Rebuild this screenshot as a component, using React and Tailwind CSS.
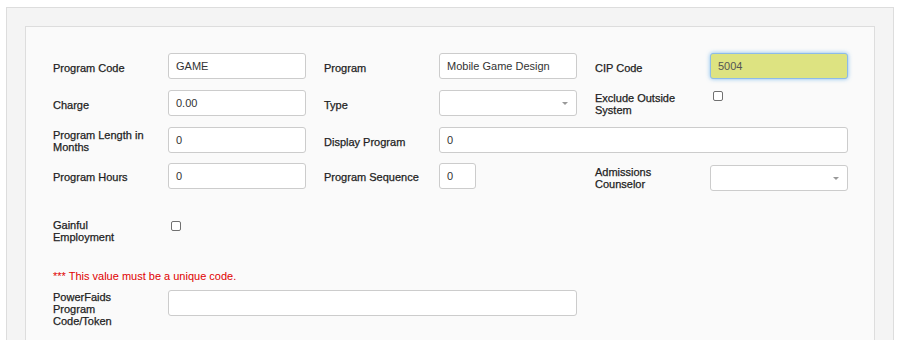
import React from 'react';

const font = { fontFamily: '"Liberation Sans", Arial, sans-serif' };

const Label = ({ lines, className = '' }) => (
  <div className={`w-[115px] shrink-0 text-[11px] leading-[12px] text-[#222] [-webkit-text-stroke:0.25px_#222] whitespace-nowrap ${className}`}>
    {lines.map((l, i) => (
      <div key={i}>{l}</div>
    ))}
  </div>
);

const TextInput = ({ value = '', className = 'w-[138px]' }) => (
  <div
    className={`h-[26px] shrink-0 rounded-[3px] border border-[#cccccc] bg-white pl-[7px] flex items-center text-[11px] text-[#333] ${className}`}
  >
    {value}
  </div>
);

const SelectBox = ({ className = '' }) => (
  <div
    className={`h-[26px] w-[138px] shrink-0 rounded-[3px] border border-[#cccccc] bg-white flex items-center justify-end pr-[8px] ${className}`}
  >
    <span className="block w-0 h-0 border-l-[3px] border-r-[3px] border-t-[3px] border-l-transparent border-r-transparent border-t-[#999]" />
  </div>
);

const CheckBox = ({ className = '' }) => (
  <span className={`block w-[10px] h-[10px] rounded-[2px] border border-[#707070] bg-white ${className}`} />
);

export default function App() {
  return (
    <div className="min-h-[340px] bg-white pt-[7px] px-[6px]" style={font}>
      <div className="border border-[#dddddd] bg-[#f4f4f4] px-[18px] pt-[18px] h-[340px]">
        <div className="border border-[#dddddd] bg-[#fafafa] h-[320px] pl-[27px] pt-[26px]">
          {/* row 1 */}
          <div className="flex gap-[18px] h-[26px]">
            <div className="flex">
              <Label lines={['Program Code']} className="pt-[9px]" />
              <TextInput value="GAME" />
            </div>
            <div className="flex">
              <Label lines={['Program']} className="pt-[9px]" />
              <TextInput value="Mobile Game Design" />
            </div>
            <div className="flex">
              <Label lines={['CIP Code']} className="pt-[9px]" />
              <div className="h-[26px] w-[138px] rounded-[3px] border border-[#8dbbe9] shadow-[0_0_4px_rgba(102,175,233,0.8)] bg-[#dde381] pl-[7px] flex items-center text-[11px] text-[#555]">
                5004
              </div>
            </div>
          </div>

          {/* row 2 */}
          <div className="flex gap-[18px] h-[26px] mt-[11px]">
            <div className="flex">
              <Label lines={['Charge']} className="pt-[9px]" />
              <TextInput value="0.00" />
            </div>
            <div className="flex">
              <Label lines={['Type']} className="pt-[9px]" />
              <SelectBox />
            </div>
            <div className="flex">
              <Label lines={['Exclude Outside', 'System']} className="pt-[2px]" />
              <CheckBox className="mt-[1px] ml-[3px]" />
            </div>
          </div>

          {/* row 3 */}
          <div className="flex gap-[18px] h-[26px] mt-[11px]">
            <div className="flex">
              <Label lines={['Program Length in', 'Months']} className="pt-[2px]" />
              <TextInput value="0" />
            </div>
            <div className="flex">
              <Label lines={['Display Program']} className="pt-[9px]" />
              <TextInput value="0" className="w-[409px]" />
            </div>
          </div>

          {/* row 4 */}
          <div className="flex gap-[18px] h-[26px] mt-[10px]">
            <div className="flex">
              <Label lines={['Program Hours']} className="pt-[8px]" />
              <TextInput value="0" />
            </div>
            <div className="flex w-[253px]">
              <Label lines={['Program Sequence']} className="pt-[8px]" />
              <TextInput value="0" className="w-[37px]" />
            </div>
            <div className="flex">
              <Label lines={['Admissions', 'Counselor']} className="pt-[3px]" />
              <SelectBox className="mt-[2px]" />
            </div>
          </div>

          {/* row 5 */}
          <div className="flex mt-[30px]">
            <Label lines={['Gainful', 'Employment']} />
            <CheckBox className="mt-[2px] ml-[3px]" />
          </div>

          <div className="mt-[27px] text-[11px] leading-[12px] text-[#e00000]">
            *** This value must be a unique code.
          </div>

          <div className="flex mt-[8px]">
            <Label lines={['PowerFaids', 'Program', 'Code/Token']} className="pt-[1px]" />
            <TextInput className="w-[409px]" />
          </div>
        </div>
      </div>
    </div>
  );
}
